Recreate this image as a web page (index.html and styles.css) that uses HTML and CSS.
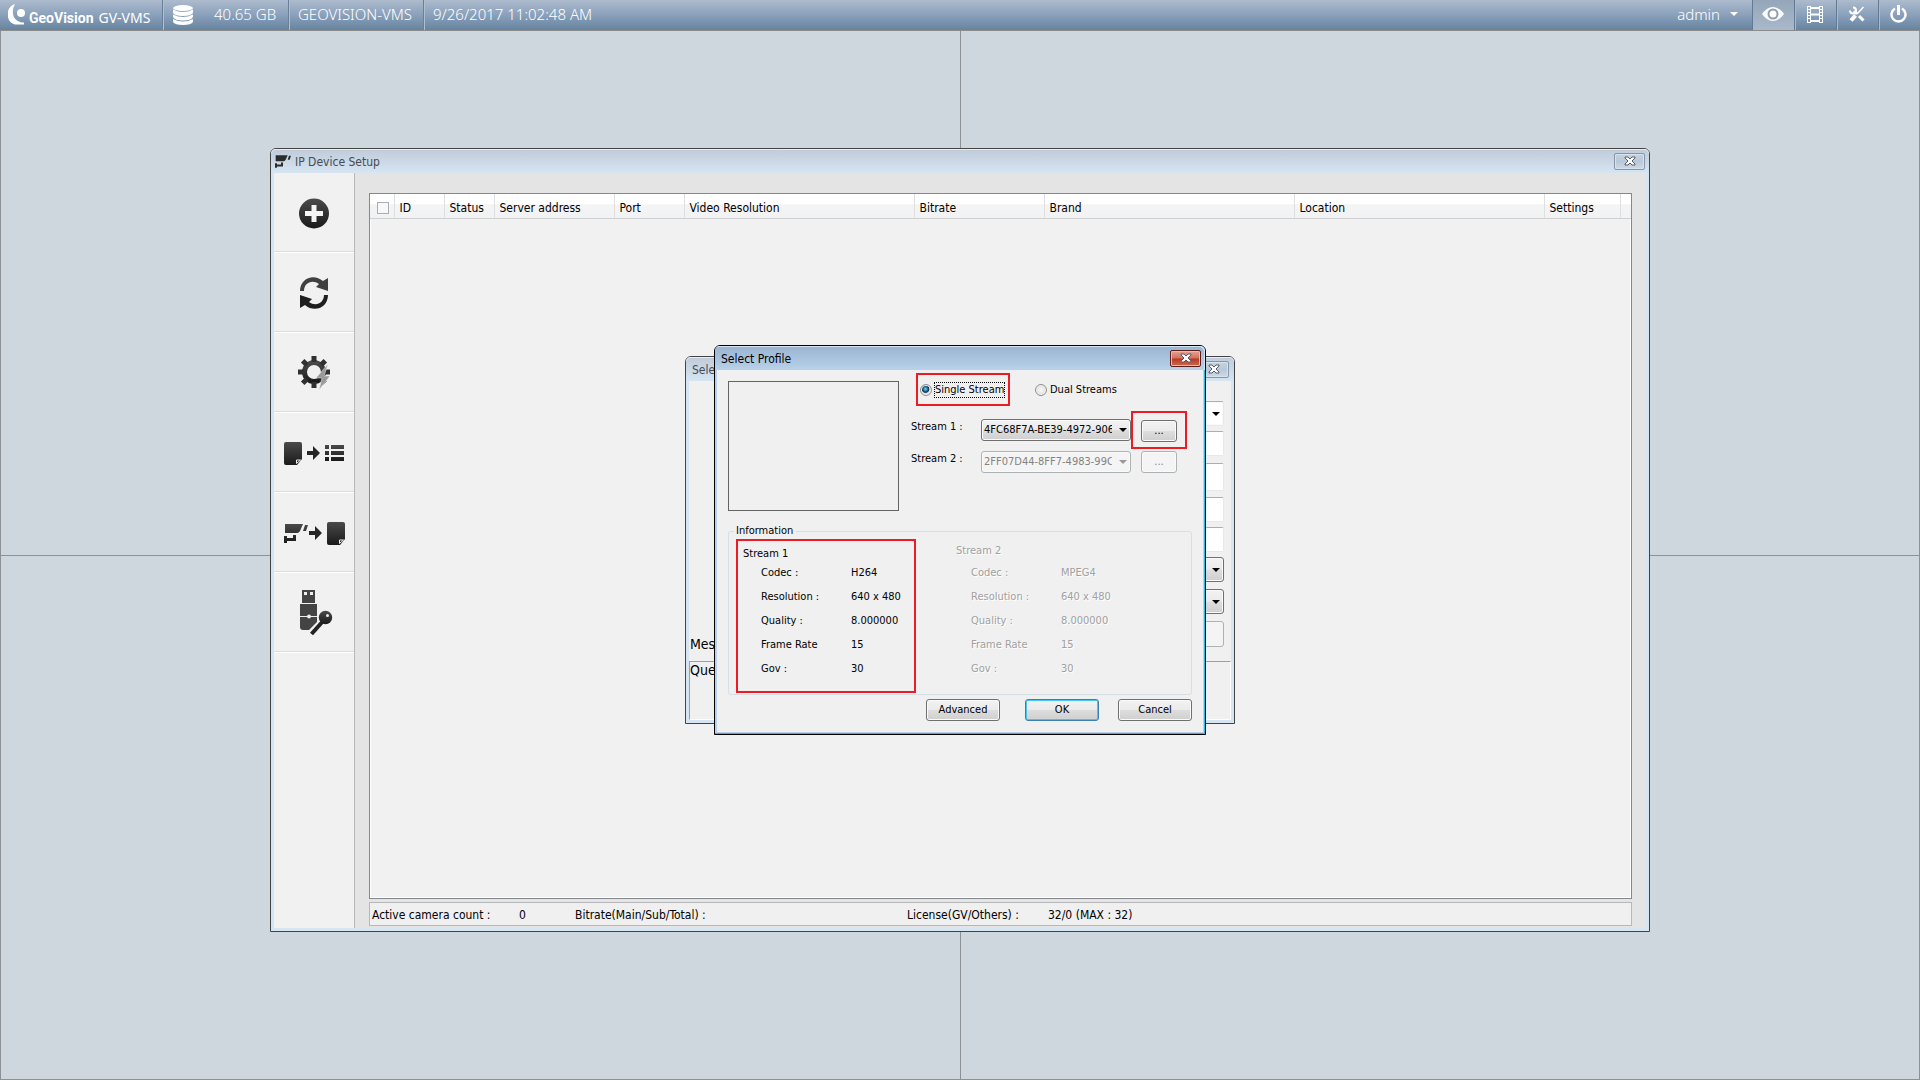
FILE: index.html
```html
<!DOCTYPE html>
<html lang="en">
<head>
<meta charset="utf-8">
<title>GV-VMS</title>
<link rel="stylesheet" href="styles.css">
</head>
<body>
<svg class="defs" width="0" height="0" aria-hidden="true">
  <defs>
    <linearGradient id="ink" x1="0" y1="0" x2="0" y2="1"><stop offset="0" stop-color="#4a4a4a"/><stop offset="1" stop-color="#1a1a1a"/></linearGradient>
    <symbol id="camera" viewBox="0 0 24 19"><path d="M1 0H19L16 7Q15 9 13 9H1ZM21 1H24L22 7H19ZM9 11H12V17H3V19H0V12H3V14H9Z"/></symbol>
    <symbol id="page" viewBox="0 0 18 23"><path d="M2 0H16Q18 0 18 2V17L13 23H2Q0 23 0 21V2Q0 0 2 0Z"/><path d="M12.500 21.500V18H16.500Z" fill="none" stroke="#f1f1f1"/></symbol>
    <symbol id="arrow" viewBox="0 0 13 14"><path d="M0 5H6V0L13 7L6 14V9H0Z"/></symbol>
    <symbol id="cross" viewBox="0 0 12 10"><path d="M1 1H4L6 3L8 1H11V2L8 5L11 8V9H8L6 7L4 9H1V8L4 5L1 2Z"/></symbol>
  </defs>
</svg>

<header class="topbar">
  <div class="brand">
    <svg width="17" height="21" viewBox="0 0 17 21" aria-hidden="true"><path d="M7 0C-3 3-3 18 7 20.500H16V18.500C6 19 2 9 7 0Z" fill="#fff"/><circle cx="13" cy="9" r="4" fill="#fff"/></svg>
    <strong>GeoVision</strong><span>GV-VMS</span>
  </div>
  <div class="cell storage">
    <svg width="20" height="20" viewBox="0 0 20 20" fill="#fff" aria-hidden="true"><ellipse cx="10" cy="3" rx="10" ry="3"/><path d="M0 4.500Q10 9.500 20 4.500V8Q18 11 10 11T0 8ZM0 9.500Q10 14.500 20 9.500V12Q18 15.500 10 15.500T0 12ZM0 14Q10 19 20 14V17Q18 20 10 20T0 17Z"/></svg>
    <span>40.65 GB</span>
  </div>
  <div class="cell host">GEOVISION-VMS</div>
  <div class="cell">9/26/2017 11:02:48 AM</div>
  <nav class="tools">
    <button class="user" type="button">admin <span class="caret"></span></button>
    <button class="tool active" type="button" aria-label="Live view"><svg width="22" height="14" viewBox="0 0 22 14"><path d="M0 7Q5 0 11 0T22 7Q17 14 11 14T0 7Z" fill="#fff"/><circle cx="11" cy="7" r="4.500" fill="none" stroke="#8c9eb4" stroke-width="2"/></svg></button>
    <button class="tool" type="button" aria-label="Playback"><svg width="16" height="17" viewBox="0 0 16 17" fill="none" stroke="#fff"><path d="M.5 0V17M15.500 0V17M3.500 0V17M12.500 0V17"/><path d="M0 .5H4M0 3.500H4M0 6.500H4M0 9.500H4M0 12.500H4M0 16.500H4M12 .5H16M12 3.500H16M12 6.500H16M12 9.500H16M12 12.500H16M12 16.500H16"/><path d="M4 2H12M4 8.500H12M4 15H12" stroke-width="2"/></svg></button>
    <button class="tool" type="button" aria-label="Tools"><svg width="16" height="16" viewBox="0 0 16 16" fill="none" stroke="#fff"><path d="M14.500 1L8 8" stroke-width="1.500"/><path d="M6.500 9.500L2 14.500" stroke-width="4"/><path d="M5 5L8 8M10 10L14.500 14.500" stroke-width="3"/><path d="M4 1.500A3 3 0 1 1 1 4.500" stroke-width="2"/></svg></button>
    <button class="tool" type="button" aria-label="Power"><svg width="17" height="18" viewBox="0 0 17 18" fill="none" stroke="#fff"><path d="M5 3.500A7 7 0 1 0 12 3.500" stroke-width="2.500"/><path d="M8.500 0V10" stroke-width="3"/></svg></button>
  </nav>
</header>

<main class="desktop">
  <div class="views"><div></div><div></div><div></div><div></div></div>

  <section class="window setup">
    <div class="titlebar">
      <svg width="16" height="13" fill="#2c2c2c" aria-hidden="true"><use href="#camera"/></svg>
      <h1>IP Device Setup</h1>
      <button class="close" type="button" aria-label="Close"><svg width="12" height="10"><use href="#cross"/></svg></button>
    </div>
    <div class="setup-body">
      <nav class="sidebar">
        <button type="button" aria-label="Add camera"><svg width="30" height="31" viewBox="0 0 30 31"><circle cx="15" cy="15.500" r="15" fill="url(#ink)"/><path d="M12.500 7H17.500V13H24V18H17.500V24H12.500V18H6V13H12.500Z" fill="#f4f4f4"/></svg></button>
        <button type="button" aria-label="Refresh"><svg width="28" height="32" viewBox="0 0 28 32"><path d="M0 14C0 1 14-4 23 4L28 1V14L16 10L19 7C12 2 4 6 4 14Z" fill="#404040"/><path d="M28 18C28 31 14 36 5 28L0 31V18L12 22L9 25C16 30 24 26 24 18Z" fill="#1f1f1f"/></svg></button>
        <button type="button" aria-label="Automatic setup"><svg width="32" height="34" viewBox="0 0 32 34"><circle cx="16" cy="16" r="9.500" fill="none" stroke="url(#ink)" stroke-width="5"/><path d="M16 0V6M16 26V32M0 16H6M26 16H32M4.700 4.700L9 9M23 23L27 27M4.700 27.300L9 23M27.300 4.700L23 9" stroke="#303030" stroke-width="5"/><path d="M30 8L18 22H24L21 34L32 20H26Z" fill="#999" stroke="#eee" stroke-width=".5"/></svg></button>
        <button type="button" aria-label="Import list"><svg width="18" height="23" fill="url(#ink)"><use href="#page"/></svg><svg width="13" height="14" fill="#262626"><use href="#arrow"/></svg><svg width="19" height="17" viewBox="0 0 19 17" fill="url(#ink)"><path d="M0 0H4V4H0ZM6 0H19V4H6ZM0 6H4V10H0ZM6 6H19V10H6ZM0 12H4V16H0ZM6 12H19V16H6Z"/></svg></button>
        <button class="export" type="button" aria-label="Export list"><svg width="24" height="19" fill="url(#ink)"><use href="#camera"/></svg><svg width="13" height="14" fill="#262626"><use href="#arrow"/></svg><svg width="18" height="23" fill="url(#ink)"><use href="#page"/></svg></button>
        <button class="dongle" type="button" aria-label="License key"><svg width="33" height="46" viewBox="0 0 33 46"><path d="M2 0H15V13H2ZM0 14H17V32L9 40H3Q0 40 0 37Z" fill="#444"/><path d="M4 2H7V5H4ZM10 2H13V5H10Z" fill="#eee"/><path d="M0 26.500H17" stroke="#eee"/><circle cx="9" cy="26.500" r="2" fill="#eee"/><path d="M12 43L23 31" stroke="#f1f1f1" stroke-width="7"/><path d="M11.500 44L24 30" stroke="#222" stroke-width="4"/><circle cx="25.500" cy="27.500" r="6.700" fill="url(#ink)"/><circle cx="27.500" cy="25.500" r="1.500" fill="#eee"/></svg></button>
      </nav>
      <div class="devices">
        <div class="list">
          <table>
            <colgroup><col class="w-check"><col class="w-small"><col class="w-small"><col class="w-address"><col class="w-port"><col class="w-video"><col class="w-bitrate"><col class="w-wide"><col class="w-wide"><col class="w-settings"><col></colgroup>
            <thead><tr><th><input type="checkbox" aria-label="Select all"></th><th>ID</th><th>Status</th><th>Server address</th><th>Port</th><th>Video Resolution</th><th>Bitrate</th><th>Brand</th><th>Location</th><th>Settings</th><th></th></tr></thead>
          </table>
        </div>
        <footer class="status"><span class="count">Active camera count :</span><span class="zero">0</span><span class="rate">Bitrate(Main/Sub/Total) :</span><span class="license">License(GV/Others) :</span><span>32/0 (MAX : 32)</span></footer>
      </div>
    </div>
  </section>

  <section class="window search">
    <div class="titlebar">
      <h2>Sele</h2>
      <button class="close" type="button" aria-label="Close"><svg width="12" height="10"><use href="#cross"/></svg></button>
    </div>
    <div class="search-body">
      <div class="fields">
        <span class="drop"><select class="plain" aria-label="Device"></select></span>
        <input type="text" aria-label="Address">
        <input class="tall" type="text" aria-label="Port">
        <input type="text" aria-label="User">
        <input type="password" aria-label="Password">
        <span class="drop gap"><select aria-label="Brand"></select></span>
        <span class="drop gap"><select aria-label="Model"></select></span>
        <button class="blank" type="button" aria-label="Apply" disabled></button>
      </div>
      <p class="message">Mes</p>
      <div class="log">Que</div>
    </div>
  </section>

  <section class="window profile">
    <div class="titlebar">
      <h2>Select Profile</h2>
      <button class="close red" type="button" aria-label="Close"><svg width="12" height="10"><use href="#cross"/></svg></button>
    </div>
    <form class="profile-body">
      <div class="upper">
        <div class="preview"></div>
        <div class="choices">
          <div class="modes">
            <label class="mark"><input type="radio" name="mode" checked><span class="focus">Single Stream</span></label>
            <label><input type="radio" name="mode"><span>Dual Streams</span></label>
          </div>
          <div class="stream">
            <label for="s1">Stream 1 :</label>
            <span class="drop"><select id="s1"><option>4FC68F7A-BE39-4972-906</option></select></span>
            <span class="more mark"><button type="button">...</button></span>
          </div>
          <div class="stream off">
            <label for="s2">Stream 2 :</label>
            <span class="drop"><select id="s2" disabled><option>2FF07D44-8FF7-4983-99C</option></select></span>
            <span class="more"><button type="button" disabled>...</button></span>
          </div>
        </div>
      </div>
      <fieldset>
        <legend>Information</legend>
        <div class="infos">
          <div class="info mark">
            <h3>Stream 1</h3>
            <dl><dt>Codec :</dt><dd>H264</dd><dt>Resolution :</dt><dd>640 x 480</dd><dt>Quality :</dt><dd>8.000000</dd><dt>Frame Rate</dt><dd>15</dd><dt>Gov :</dt><dd>30</dd></dl>
          </div>
          <div class="info faded">
            <h3>Stream 2</h3>
            <dl><dt>Codec :</dt><dd>MPEG4</dd><dt>Resolution :</dt><dd>640 x 480</dd><dt>Quality :</dt><dd>8.000000</dd><dt>Frame Rate</dt><dd>15</dd><dt>Gov :</dt><dd>30</dd></dl>
          </div>
        </div>
      </fieldset>
      <div class="actions">
        <button class="advanced" type="button">Advanced</button>
        <button class="default" type="button">OK</button>
        <button type="button">Cancel</button>
      </div>
    </form>
  </section>
</main>
</body>
</html>
```
FILE: styles.css
```css
* { box-sizing: border-box; }
body {
  margin: 0;
  min-height: 100vh;
  display: flex;
  flex-direction: column;
  font: 12px/16px "DejaVu Sans Condensed", Tahoma, "DejaVu Sans", sans-serif;
  color: #000;
  background: #ced6de;
}
h1, h2, h3, p, dl, dd { margin: 0; font-size: inherit; font-weight: normal; }
button, input, select { font: inherit; color: inherit; margin: 0; }
.defs { position: absolute; }

/* Top bar */
.topbar {
  display: flex;
  height: 31px;
  font-family: "Noto Sans", sans-serif;
  font-weight: 300;
  font-size: 15px;
  color: #fff;
  background: linear-gradient(#adbbcd, #8aa0bb 50%, #66849f);
  border-bottom: 1px solid #8c8c8c;
}
.brand { display: flex; align-items: center; width: 162px; padding-left: 8px; white-space: nowrap; }
.brand svg { margin-bottom: 2px; }
.brand strong { margin: 6px 5px 0 4px; font: bold 14px/16px Roboto, sans-serif; }
.brand span { margin-top: 6px; font-weight: 400; font-size: 14px; }
.cell { display: flex; align-items: center; padding: 0 9px 2px; border-left: 1px solid #6b7f96; box-shadow: inset 1px 0 #b0bfd0; white-space: nowrap; }
.cell.storage { gap: 21px; width: 126px; padding-left: 10px; }
.cell.storage svg { margin-top: 2px; }
.cell.host { width: 135px; }
.tools { display: flex; margin-left: auto; }
.tools button { display: flex; align-items: center; justify-content: center; border: 0; padding: 0 2px 2px 0; background: none; }
.tools .user { gap: 10px; padding-right: 14px; }
.caret { border: 4px solid transparent; border-top-color: #fff; border-bottom: 0; }
.tools .tool { width: 42px; border-left: 1px solid #647a93; box-shadow: inset 1px 0 #a9b8ca; }
.tools .active { background: linear-gradient(#95a6ba, #a9b9cb); box-shadow: none; }

/* Desktop */
.desktop { position: relative; flex: 1; }
.views { position: absolute; inset: 0; display: grid; grid-template: 1fr 1fr / 1fr 1fr; border-left: 1px solid #8c9296; border-bottom: 1px solid #8c9296; }
.views div { border-right: 1px solid #8c9296; }
.views div:nth-child(n+3) { border-top: 1px solid #8c9296; }

/* Windows */
.window {
  position: fixed;
  inset: 0;
  margin: auto;
  display: flex;
  flex-direction: column;
  height: fit-content;
  padding: 0 3px 3px;
  border: 1px solid #444;
  border-radius: 6px 6px 0 0;
  background: #d7e4f2;
}
.titlebar {
  display: flex;
  align-items: center;
  height: 24px;
  margin: 0 -3px;
  padding: 0 5px 0 6px;
  border-radius: 5px 5px 0 0;
  color: #444c55;
  background: linear-gradient(#bfcbd9, #d7e4f2);
  box-shadow: inset 0 1px #e6edf5;
}
.titlebar h1, .titlebar h2 { padding-top: 2px; }
.close { display: flex; align-items: center; justify-content: center; width: 31px; height: 17px; margin-left: auto; padding: 0; border: 1px solid #8496a8; border-radius: 2px; background: linear-gradient(#c6d2df, #b9c8d8 50%, #cdd9e6); box-shadow: inset 0 0 0 1px #d8e2ec; }
.close svg { fill: #fff; stroke: #555c66; stroke-width: 1; }
.close.red { border-color: #5e1f1c; background: linear-gradient(#e4a394, #d2705c 48%, #b93820 52%, #cc6b50); box-shadow: inset 0 0 0 1px #eab9ac; }

.setup { width: min(1380px, 96vw); }
.setup .titlebar { padding: 0 4px; gap: 4px; }
.setup-body { display: flex; height: 755px; background: #e4e4e4; }
.sidebar { width: 81px; background: #f1f1f1; border-right: 1px solid #b8b8b8; }
.sidebar button { display: flex; align-items: center; justify-content: center; gap: 5px; width: 100%; height: 80px; padding: 3px 0 0; border: 0; border-bottom: 1px solid #dcdcdc; background: none; box-shadow: 0 1px #fff; }
.sidebar button:first-child { height: 79px; padding-top: 2px; }
.sidebar .export { gap: 1px; }
.sidebar .export svg:last-child { margin-left: 4px; }
.sidebar .dongle { padding-left: 4px; }
.devices { flex: 1; display: flex; flex-direction: column; gap: 3px; padding: 20px 14px 2px; }
.list { flex: 1; border: 1px solid #828790; background: #f1f1f1; box-shadow: inset 0 0 0 1px #fff; overflow: hidden; }
table { width: 100%; table-layout: fixed; border-collapse: collapse; }
th { height: 24px; padding: 4px 0 0 5px; border-right: 1px solid #dedfe1; border-bottom: 1px solid #d0d0d0; text-align: left; font-weight: normal; line-height: 16px; background: linear-gradient(#fff 40%, #f4f4f5 45%, #f1f2f3); white-space: nowrap; }
th:first-child { padding-left: 7px; }
th:last-child { border-right: 0; }
.w-check { width: 24px; } .w-small { width: 50px; } .w-address { width: 120px; } .w-port { width: 70px; }
.w-video { width: 230px; } .w-bitrate { width: 130px; } .w-wide { width: 250px; } .w-settings { width: 76px; }
input[type="checkbox"] { display: block; appearance: none; width: 12px; height: 12px; border: 1px solid #a9adb8; background: #f8f8f8; }
.status { display: flex; align-items: center; height: 24px; padding: 1px 0 0 2px; border: 1px solid #b8b8b8; background: #f0f0f0; white-space: nowrap; }
.count { width: 147px; } .zero { width: 56px; } .rate { width: 332px; } .license { width: 141px; }

/* Shared controls */
.drop { position: relative; display: block; }
.drop::after { content: ""; position: absolute; right: 4px; top: 50%; margin-top: -2px; border: 4px solid transparent; border-top-color: #000; border-bottom: 0; pointer-events: none; }
.drop select { display: block; appearance: none; width: 100%; height: 22px; padding: 0 18px 0 2px; border: 1px solid #707070; border-radius: 3px; background: linear-gradient(#f2f2f2, #ebebeb 48%, #dddddd 52%, #cfcfcf); box-shadow: inset 0 0 0 1px #fafafa; opacity: 1; }
.off .drop::after { border-top-color: #999; }
select:disabled, button:disabled { color: #838383; }
.more button, .actions button { height: 22px; padding: 0; border: 1px solid #707070; border-radius: 3px; background: linear-gradient(#f2f2f2, #ebebeb 48%, #dddddd 52%, #cfcfcf); box-shadow: inset 0 0 0 1px #fafafa; }
.drop select:disabled, .more button:disabled { border-color: #adb2b5; background: #f4f4f4; }

/* Device search window */
.search { width: 550px; }
.search-body { display: flex; flex-direction: column; padding-top: 20px; background: #f0f0f0; }
.fields { display: flex; flex-direction: column; align-self: flex-end; gap: 5px; width: 200px; margin-right: 7px; }
.fields input, .fields .drop select { height: 25px; }
.fields input, .fields .drop .plain { border: 1px solid #e3e9ef; border-top-color: #abadb3; border-radius: 2px; background: #fff; }
.fields .tall { height: 28px; margin: 2px 0 1px; }
.fields .gap { margin-bottom: 2px; }
.blank { height: 26px; border: 1px solid #adb2b5; border-radius: 3px; background: #f4f4f4; }
.message { margin-top: -11px; padding-left: 1px; font-size: 14px; }
.log { height: 59px; margin-top: 9px; border: 1px solid #fff; border-top-color: #a0a0a0; border-left-color: #a0a0a0; font-size: 14px; }

/* Profile dialog */
.profile { width: 492px; padding: 0 2px 2px; border-color: #000; font-size: 11px; background: #b9d1ea; box-shadow: inset -1px -1px #2fb9e0; }
.profile .titlebar { margin: 0 -2px; color: #000; background: linear-gradient(#99b4d1, #b9d1ea); box-shadow: inset -1px 1px #d5e4f3; font-size: 12px; padding-right: 4px; }
.profile-body { padding: 0 11px 11px; background: #f0f0f0; }
.upper { display: flex; gap: 12px; }
.preview { width: 171px; height: 130px; margin-top: 11px; border: 1px solid #646464; }
.mark { border: 2px solid #ed1c24; }
.modes { display: flex; gap: 22px; padding: 3px 0 5px 5px; }
.modes label { display: flex; align-items: center; gap: 3px; height: 33px; padding: 0 4px 0 3px; white-space: nowrap; }
.modes .mark { padding-left: 2px; width: 94px; }
.focus { outline: 1px dotted #000; line-height: 14px; }
input[type="radio"] { appearance: none; width: 12px; height: 12px; flex: none; border: 1px solid #8e8f8f; border-radius: 50%; background: radial-gradient(#f8f8f8, #d4d4d4); box-shadow: inset 0 0 0 1px #f4f4f4; }
input[type="radio"]:checked { background: radial-gradient(circle at 45% 40%, #7fd8f4, #16628f 30%, #10304f 42%, #dcdcdc 52%); }
.stream { display: grid; grid-template-columns: 70px 150px auto; align-items: center; height: 38px; }
.stream.off { margin-top: -6px; }
.stream label { padding-bottom: 7px; }
.more { height: 38px; padding: 8px 10px; }
.more.mark { padding: 7px 8px; }
.more button { display: block; width: 36px; }
fieldset { margin: 12px 0 0; padding: 0 0 1px 7px; border: 1px solid #d5dfe5; border-radius: 3px; min-width: 0; }
legend { margin-left: -2px; padding: 0 3px 0 2px; }
.infos { display: flex; gap: 35px; }
.info { width: 180px; height: 154px; padding: 5px; }
.info.faded { color: #a0a0a0; text-shadow: 1px 1px #fff; padding-top: 4px; }
.info dl { display: grid; grid-template-columns: 90px 1fr; row-gap: 8px; margin-top: 3px; padding-left: 18px; }
.info.faded dl { padding-left: 15px; margin-top: 6px; }
.info dt, .info dd { white-space: nowrap; }
.actions { display: flex; justify-content: flex-end; gap: 19px; margin-top: 4px; }
.actions button { width: 74px; }
.actions .advanced { margin-right: 6px; }
.actions .default { border-color: #3c7fb1; box-shadow: inset 0 0 0 1px #45c8f0; }
```
